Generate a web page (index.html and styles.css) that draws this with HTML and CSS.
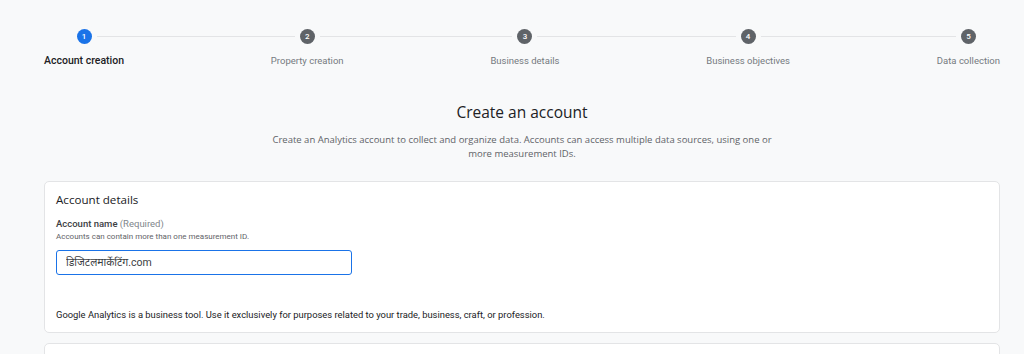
FILE: index.html
```html
<!DOCTYPE html>
<html lang="en">
<head>
  <meta charset="UTF-8">
  <title>Create an account</title>
  <link rel="stylesheet" href="styles.css">
</head>
<body>
  <div class="page">
    <!-- Stepper -->
    <div class="stepper">
      <div class="step active">
        <span class="dot">1</span>
        <span class="label">Account creation</span>
      </div>
      <div class="step">
        <span class="dot">2</span>
        <span class="label">Property creation</span>
      </div>
      <div class="step">
        <span class="dot">3</span>
        <span class="label">Business details</span>
      </div>
      <div class="step">
        <span class="dot">4</span>
        <span class="label">Business objectives</span>
      </div>
      <div class="step">
        <span class="dot">5</span>
        <span class="label">Data collection</span>
      </div>
    </div>

    <h1>Create an account</h1>
    <p class="intro">Create an Analytics account to collect and organize data. Accounts can access multiple data sources, using one or more measurement IDs.</p>

    <!-- Account details -->
    <div class="card">
      <h2>Account details</h2>
      <label class="field-label" for="account-name">Account name <span class="req">(Required)</span></label>
      <p class="hint">Accounts can contain more than one measurement ID.</p>
      <input type="text" id="account-name" class="field" value="डिजिटलमार्केटिंग.com">
      <p class="note">Google Analytics is a business tool. Use it exclusively for purposes related to your trade, business, craft, or profession.</p>
    </div>

    <div class="card next"></div>
  </div>
</body>
</html>
```

FILE: styles.css
```css
* { margin: 0; padding: 0; box-sizing: border-box; }
body {
  background: #f8f9fa;
  color: #202124;
  font-family: Roboto, "Noto Sans", "Noto Sans Devanagari", sans-serif;
  overflow: hidden;
}
.page {
  padding: 0 24px 0 44px;
}

/* Stepper */
.stepper {
  position: relative;
  display: flex;
  justify-content: space-between;
  padding-top: 29px;
}
.stepper::before {
  content: "";
  position: absolute;
  top: 36px;
  left: 40px;
  right: 32px;
  height: 1px;
  background: #e3e4e6;
}
.step {
  position: relative;
  display: flex;
  flex-direction: column;
  align-items: center;
}
.dot {
  width: 15px;
  height: 15px;
  border-radius: 50%;
  background: #5f6368;
  color: #fff;
  font-size: 8px;
  font-weight: 500;
  line-height: 15px;
  text-align: center;
  box-shadow: 0 0 0 5px #f8f9fa;
}
.step.active .dot { background: #1a73e8; }
.label {
  margin-top: 10px;
  font-size: 9.5px;
  line-height: 14px;
  color: #757a80;
  white-space: nowrap;
}
.step.active .label {
  color: #202124;
  font-weight: 500;
  font-size: 10.5px;
}

/* Heading */
h1 {
  margin-top: 32px;
  text-align: center;
  font-family: "Open Sans", Roboto, sans-serif;
  font-size: 15.5px;
  font-weight: 400;
  line-height: 24px;
  color: #202124;
}
.intro {
  max-width: 520px;
  margin: 9px auto 0;
  text-align: center;
  font-family: "Open Sans", Roboto, sans-serif;
  font-size: 9.5px;
  line-height: 14px;
  color: #5f6368;
}

/* Card */
.card {
  margin-top: 20px;
  background: #fff;
  border: 1px solid #e3e4e6;
  border-radius: 5px;
  padding: 9px 11px 11px;
}
h2 {
  font-family: "Open Sans", Roboto, sans-serif;
  font-size: 11.6px;
  font-weight: 400;
  line-height: 18px;
  color: #202124;
}
.field-label {
  display: block;
  margin-top: 9px;
  font-size: 9.5px;
  line-height: 12px;
  font-weight: 500;
  color: #3c4043;
}
.req { font-weight: 400; color: #80868b; }
.hint {
  margin-top: 2px;
  font-size: 8px;
  line-height: 10px;
  color: #5f6368;
}
.field {
  display: block;
  margin-top: 8px;
  width: 296px;
  height: 25px;
  padding: 0 9px;
  border: 1.5px solid #1a73e8;
  border-radius: 3px;
  font-family: Roboto, "Noto Sans Devanagari", sans-serif;
  font-size: 10.5px;
  color: #3c4043;
  outline: none;
}
.note {
  margin-top: 34px;
  font-size: 9.4px;
  line-height: 12px;
  color: #202124;
}
.card.next {
  margin-top: 10px;
  height: 40px;
}
```
